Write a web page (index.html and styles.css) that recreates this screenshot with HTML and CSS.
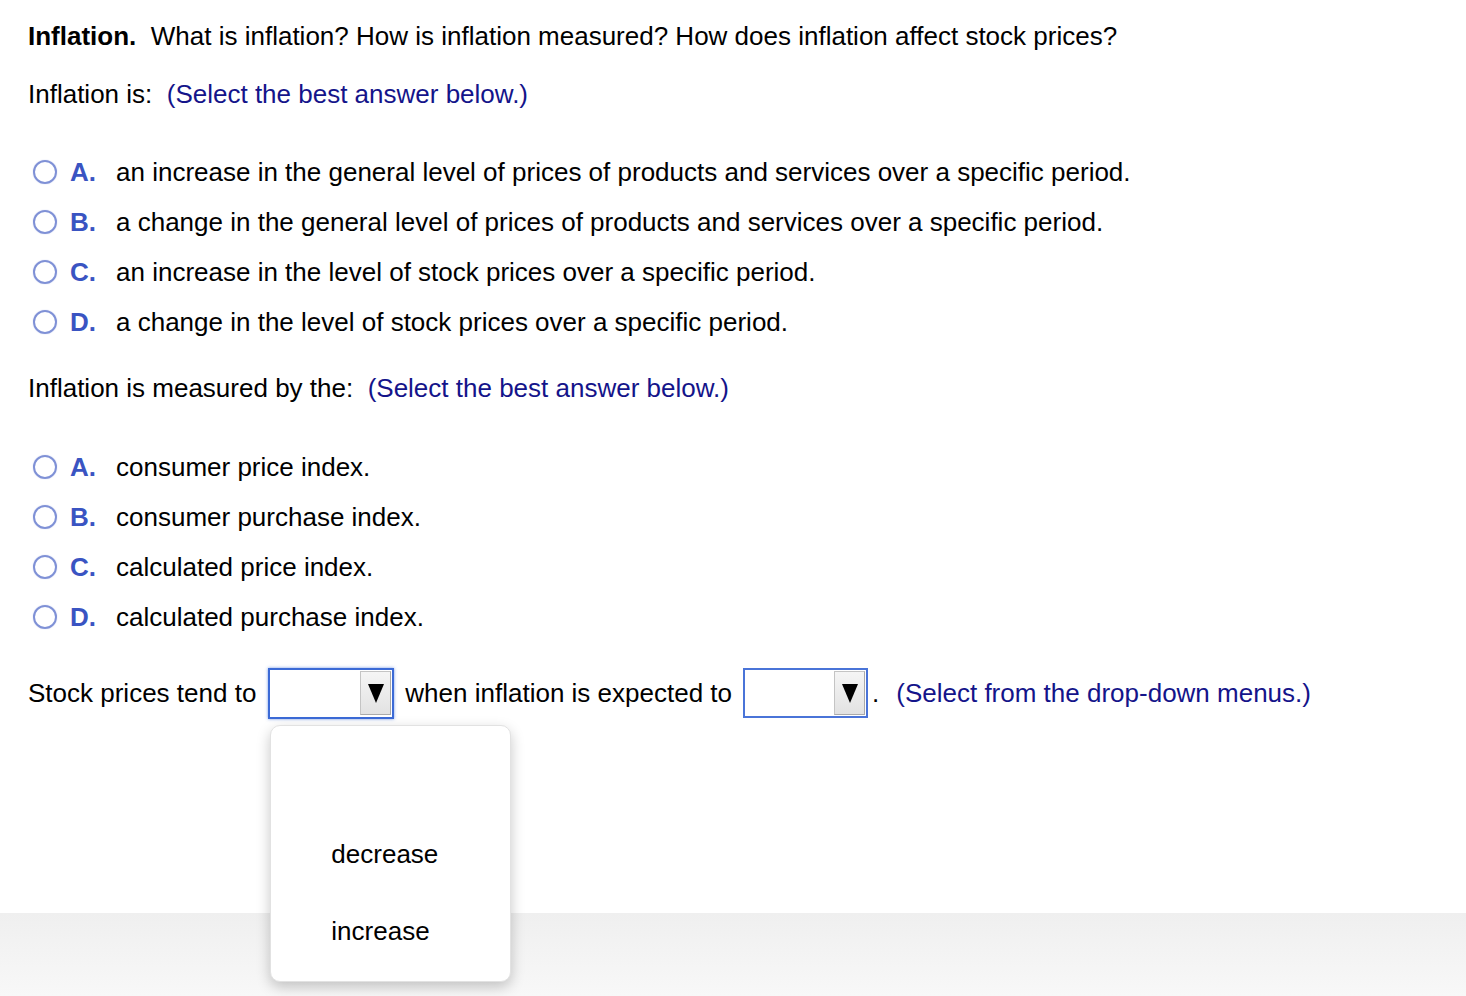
FILE: index.html
```html
<!DOCTYPE html>
<html lang="en">
<head>
    <meta charset="UTF-8">
    <title>Inflation</title>
    <link rel="stylesheet" href="styles.css">
</head>
<body>
    <div class="question">
        <p class="prompt"><b>Inflation.</b>&nbsp; What is inflation? How is inflation measured? How does inflation affect stock prices?</p>

        <!-- Part 1 -->
        <p class="part part-first">Inflation is:&nbsp; <span class="hint">(Select the best answer below.)</span></p>
        <div class="choices">
            <div class="choice"><span class="radio"></span><span class="letter">A.</span><span>an increase in the general level of prices of products and services over a specific period.</span></div>
            <div class="choice"><span class="radio"></span><span class="letter">B.</span><span>a change in the general level of prices of products and services over a specific period.</span></div>
            <div class="choice"><span class="radio"></span><span class="letter">C.</span><span>an increase in the level of stock prices over a specific period.</span></div>
            <div class="choice"><span class="radio"></span><span class="letter">D.</span><span>a change in the level of stock prices over a specific period.</span></div>
        </div>

        <!-- Part 2 -->
        <p class="part">Inflation is measured by the:&nbsp; <span class="hint">(Select the best answer below.)</span></p>
        <div class="choices">
            <div class="choice"><span class="radio"></span><span class="letter">A.</span><span>consumer price index.</span></div>
            <div class="choice"><span class="radio"></span><span class="letter">B.</span><span>consumer purchase index.</span></div>
            <div class="choice"><span class="radio"></span><span class="letter">C.</span><span>calculated price index.</span></div>
            <div class="choice"><span class="radio"></span><span class="letter">D.</span><span>calculated purchase index.</span></div>
        </div>

        <!-- Part 3 -->
        <div class="fill-row">
            <span>Stock prices tend to</span>
            <span class="dropdown">
                <span class="select select-open"><span class="arrow-btn"><span class="arrow"></span></span></span>
                <div class="menu">
                    <div class="menu-item">decrease</div>
                    <div class="menu-item">increase</div>
                </div>
            </span>
            <span>when inflation is expected to</span>
            <span class="select select-second"><span class="arrow-btn"><span class="arrow"></span></span></span>
            <span class="dot">.</span>
            <span class="hint">(Select from the drop-down menus.)</span>
        </div>
    </div>
    <div class="footer"></div>
</body>
</html>
```

FILE: styles.css
```css
*{
    box-sizing: border-box;
}
body{
    margin: 0;
    font-family: "Liberation Sans", Arial, Helvetica, sans-serif;
    font-size: 26px;
    color: #000;
    background: #fff;
}
p{
    margin: 0;
    line-height: 30px;
}
/*
* Question
*/
.question{
    padding: 21px 28px 0 28px;
}
.prompt{
    margin-bottom: 28px;
}
.hint{
    color: #14148a;
}
.part{
    margin-top: 26px;
}
.part-first{
    margin-top: 0;
}
.choices{
    margin-top: 39px;
}
.part-first + .choices{
    margin-top: 38px;
}
/*
* Choices
*/
.choice{
    display: flex;
    align-items: center;
    height: 50px;
}
.radio{
    width: 24px;
    height: 24px;
    margin-left: 5px;
    margin-right: 13px;
    border: 2px solid #7f91d6;
    border-radius: 50%;
    box-shadow: 0 0 1px rgba(90, 110, 210, 0.5);
    flex-shrink: 0;
}
.letter{
    width: 46px;
    font-weight: bold;
    color: #3a54c2;
}
/*
* Drop-down row
*/
.fill-row{
    display: flex;
    align-items: center;
    height: 54px;
    margin-top: 24px;
}
.dropdown{
    position: relative;
    margin: 0 11px 0 12px;
}
.select{
    display: flex;
    justify-content: flex-end;
    align-items: center;
    width: 126px;
    height: 51px;
    padding: 0 1px 0 0;
    border: 2px solid #3b6ad6;
    background: #fff;
}
.select-open{
    box-shadow: 0 0 3px rgba(60, 110, 220, 0.7);
}
.select-second{
    width: 125px;
    height: 50px;
    margin: 0 4px 0 11px;
    border-color: #4a74d8;
}
.arrow-btn{
    display: flex;
    justify-content: center;
    align-items: center;
    width: 31px;
    height: 44px;
    border: 1px solid #c4c4c4;
    border-bottom-color: #aaa;
    border-right-color: #aaa;
    background: linear-gradient(#f5f5f5, #e2e2e2);
}
.arrow{
    width: 0;
    height: 0;
    border-left: 8px solid transparent;
    border-right: 8px solid transparent;
    border-top: 19px solid #000;
}
.dot{
    margin-right: 17px;
}
/*
* Open menu
*/
.menu{
    position: absolute;
    left: 2px;
    top: 57px;
    z-index: 2;
    width: 241px;
    height: 257px;
    padding-top: 113px;
    padding-left: 60px;
    background: #fff;
    border-radius: 10px;
    border: 1px solid #e2e2e2;
    box-shadow: 0 5px 14px rgba(0, 0, 0, 0.22);
}
.menu-item{
    height: 77px;
    line-height: 30px;
}
/*
* Footer band
*/
.footer{
    margin-top: 193px;
    height: 83px;
    background: linear-gradient(#efefef, #f8f8f8);
}
```
